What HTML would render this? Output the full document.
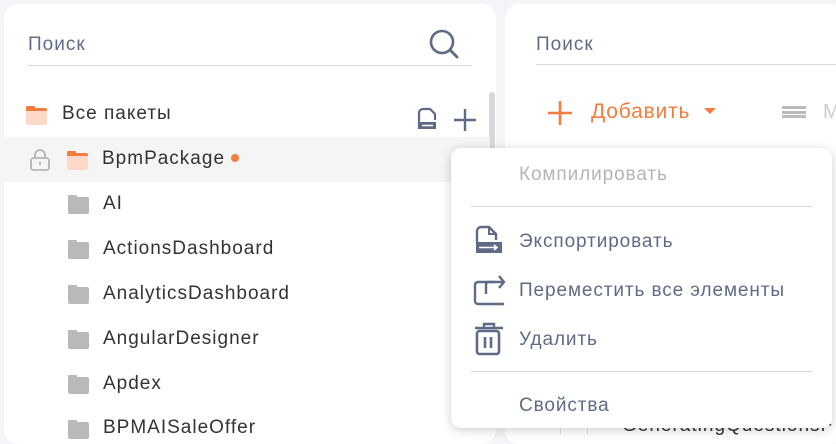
<!DOCTYPE html>
<html><head><meta charset="utf-8"><style>
body{margin:0;width:836px;height:434px;background:#f4f5f8;font-family:"Liberation Sans",sans-serif;position:relative;overflow:hidden}
.abs{position:absolute}
.panel{position:absolute;background:#fff;border-radius:14px}
.t{position:absolute;font-size:19px;color:#333;white-space:nowrap;letter-spacing:1px}
.fold{position:absolute;width:21px;height:17px;background:#b9b9b9;border-radius:2px}
.fold:before{content:"";position:absolute;left:0;top:-2px;width:9px;height:3px;background:#b9b9b9;border-radius:1px 1px 0 0}
.ofold{background:#ffd9c8;border-top:3px solid #f47c3c;box-sizing:border-box}
.ofold:before{background:#f47c3c;top:-5px}
.mi{position:absolute;left:519px;font-size:19px;color:#5f6b86;white-space:nowrap;letter-spacing:0.9px}
</style></head><body>
<div class="panel" style="left:4px;top:4px;width:492px;height:440px"></div>
<div class="panel" style="left:505px;top:4px;width:340px;height:440px"></div>

<div class="t" style="left:28px;top:34px;color:#5f6b86">Поиск</div>
<div class="abs" style="left:28px;top:65px;width:444px;height:1px;background:#d6d8de"></div>
<svg class="abs" style="left:428px;top:28px" width="34" height="32" viewBox="0 0 34 32"><circle cx="14" cy="14" r="11" fill="none" stroke="#5f6b86" stroke-width="2.6"/><path d="M22 22l7 7" stroke="#5f6b86" stroke-width="2.8" stroke-linecap="round"/></svg>

<div class="fold ofold" style="left:26px;top:108px"></div>
<div class="t" style="left:62px;top:103px">Все пакеты</div>
<svg class="abs" style="left:417px;top:107px" width="22" height="24" viewBox="0 0 22 24"><path d="M2 22V6a4 4 0 0 1 4-4h7l5 5v6" fill="none" stroke="#5f6b86" stroke-width="2.2"/><rect x="2" y="15" width="17" height="7" fill="#5f6b86"/><path d="M5 18.5h11" stroke="#fff" stroke-width="1.5"/></svg>
<svg class="abs" style="left:452px;top:107px" width="26" height="26" viewBox="0 0 26 26"><path d="M13 2v22M2 13h22" stroke="#5f6b86" stroke-width="2.4"/></svg>
<div class="abs" style="left:489px;top:92px;width:6px;height:80px;background:#d6d8de;border-radius:3px"></div>

<div class="abs" style="left:4px;top:137px;width:486px;height:45px;background:#f5f5f5"></div>
<svg class="abs" style="left:29px;top:149px" width="22" height="22" viewBox="0 0 22 22"><path d="M6 9V6a5 5 0 0 1 10 0v3" fill="none" stroke="#b5b5b5" stroke-width="1.8"/><rect x="2" y="9" width="18" height="12" rx="2.5" fill="none" stroke="#b5b5b5" stroke-width="1.8"/><path d="M11 13v3" stroke="#b5b5b5" stroke-width="1.8"/></svg>
<div class="fold ofold" style="left:67px;top:153px"></div>
<div class="t" style="left:102px;top:148px">BpmPackage</div>
<div class="abs" style="left:231px;top:154px;width:8px;height:8px;border-radius:50%;background:#f47c3c"></div>

<div class="fold" style="left:68px;top:197px"></div><div class="t" style="left:103px;top:193px">AI</div>
<div class="fold" style="left:68px;top:242px"></div><div class="t" style="left:103px;top:238px">ActionsDashboard</div>
<div class="fold" style="left:68px;top:287px"></div><div class="t" style="left:103px;top:283px">AnalyticsDashboard</div>
<div class="fold" style="left:68px;top:332px"></div><div class="t" style="left:103px;top:328px">AngularDesigner</div>
<div class="fold" style="left:68px;top:377px"></div><div class="t" style="left:103px;top:373px">Apdex</div>
<div class="fold" style="left:68px;top:422px"></div><div class="t" style="left:103px;top:417px">BPMAISaleOffer</div>

<div class="t" style="left:536px;top:34px;color:#5f6b86">Поиск</div>
<div class="abs" style="left:536px;top:64px;width:300px;height:1px;background:#d6d8de"></div>
<svg class="abs" style="left:547px;top:100px" width="26" height="26" viewBox="0 0 26 26"><path d="M13 1v24M1 13h24" stroke="#f47c3c" stroke-width="2.6"/></svg>
<div class="t" style="left:591px;top:100px;color:#f47c3c;font-size:21px;letter-spacing:0.8px">Добавить</div>
<svg class="abs" style="left:704px;top:108px" width="12" height="8"><path d="M0 0h12L6 6z" fill="#f47c3c"/></svg>
<div class="abs" style="left:782px;top:106px;width:24px;height:12px;border-top:3px solid #bbb;border-bottom:3px solid #bbb;box-sizing:border-box"></div>
<div class="abs" style="left:782px;top:110.5px;width:24px;height:3px;background:#bbb"></div>
<div class="t" style="left:823px;top:101px;color:#ccc;font-size:20px">M</div>
<div class="abs" style="left:560px;top:410px;width:1px;height:24px;background:#ddd"></div>
<div class="abs" style="left:587px;top:410px;width:1px;height:24px;background:#ddd"></div>
<div class="t" style="left:622px;top:415px">GeneratingQuestionsF</div>

<div class="abs" style="left:451px;top:148px;width:381px;height:280px;background:#fff;border-radius:10px;box-shadow:0 2px 10px rgba(0,0,0,.2)"></div>
<div class="mi" style="top:164px;color:#b5b5b5">Компилировать</div>
<div class="abs" style="left:471px;top:206px;width:341px;height:1px;background:#d6d8de"></div>
<svg class="abs" style="left:474px;top:224px" width="30" height="32" viewBox="0 0 30 32"><path d="M3 18V7a4 4 0 0 1 4-4h8l7 7v6" fill="none" stroke="#5f6b86" stroke-width="2.4"/><path d="M15 3v7h7" fill="none" stroke="#5f6b86" stroke-width="2"/><rect x="2" y="18" width="26" height="11" fill="#5f6b86"/><path d="M5 23.5h18M20 21l3 2.5-3 2.5" stroke="#fff" stroke-width="1.6" fill="none"/></svg>
<div class="mi" style="top:231px">Экспортировать</div>
<svg class="abs" style="left:473px;top:274px" width="34" height="32" viewBox="0 0 34 32"><path d="M21 8H5a3 3 0 0 0-3 3v16a3 3 0 0 0 3 3h26" fill="none" stroke="#5f6b86" stroke-width="2.4"/><path d="M13 20v-9a3 3 0 0 1 3-3h15M26 2l5 6-5 6" fill="none" stroke="#5f6b86" stroke-width="2.4"/></svg>
<div class="mi" style="top:280px">Переместить все элементы</div>
<svg class="abs" style="left:473px;top:322px" width="32" height="34" viewBox="0 0 32 34"><path d="M2 6h28M11 6V2h10v4" fill="none" stroke="#5f6b86" stroke-width="2.4"/><rect x="4" y="9" width="22" height="23" rx="2.5" fill="none" stroke="#5f6b86" stroke-width="2.6"/><path d="M12 15v11M18 15v11" stroke="#5f6b86" stroke-width="2.6"/></svg>
<div class="mi" style="top:329px">Удалить</div>
<div class="abs" style="left:471px;top:371px;width:341px;height:1px;background:#d6d8de"></div>
<div class="mi" style="top:395px">Свойства</div>
</body></html>
